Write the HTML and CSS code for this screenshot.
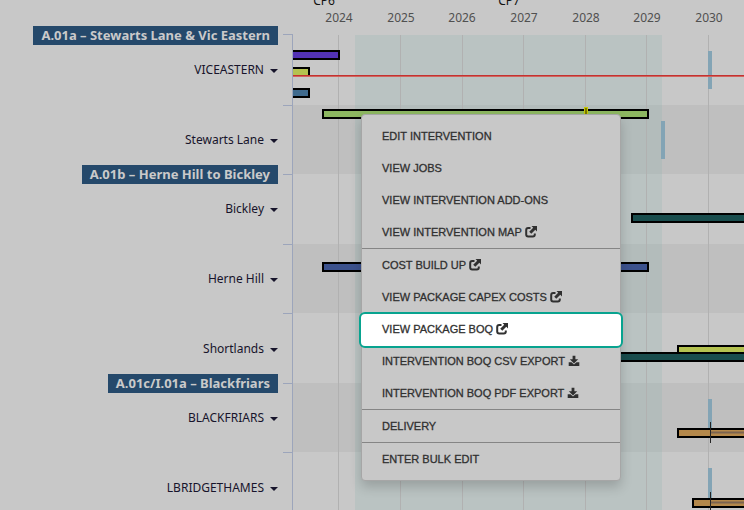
FILE: index.html
```html
<!DOCTYPE html>
<html lang="en">
<head>
<meta charset="utf-8">
<title>Intervention timeline</title>
<link rel="stylesheet" href="styles.css">
</head>
<body>
<svg class="sprite" aria-hidden="true">
  <symbol id="external" viewBox="0 0 12 12">
    <path d="M5.500 2H3.200Q1.200 2 1.200 4v4.600q0 2 2 2h4.600q2 0 2-2V7.400" fill="none" stroke="currentColor" stroke-width="2"/>
    <path d="M6.500 0H12v5.500l-1.700-1.700-4 4-2.100-2.100 4-4z" fill="currentColor"/>
  </symbol>
  <symbol id="download" viewBox="0 0 12 12">
    <path d="M4.600 .8h2.800v3.500h2.800L6 8.400 1.800 4.300h2.800z" fill="currentColor"/>
    <path d="M.7 7.300h2.800L6 9.600l2.500-2.300h2.800v3.700H.7z" fill="currentColor"/>
  </symbol>
</svg>
<main class="timeline">
  <nav class="places" aria-label="Locations">
    <section class="group">
      <h2 class="group-name">A.01a – Stewarts Lane &amp; Vic Eastern</h2>
      <div class="group-rows">
        <button class="place">VICEASTERN<span class="caret"></span></button>
        <button class="place">Stewarts Lane<span class="caret"></span></button>
      </div>
    </section>
    <section class="group">
      <h2 class="group-name">A.01b – Herne Hill to Bickley</h2>
      <div class="group-rows">
        <button class="place">Bickley<span class="caret"></span></button>
        <button class="place">Herne Hill<span class="caret"></span></button>
        <button class="place">Shortlands<span class="caret"></span></button>
      </div>
    </section>
    <section class="group">
      <h2 class="group-name">A.01c/I.01a – Blackfriars</h2>
      <div class="group-rows">
        <button class="place">BLACKFRIARS<span class="caret"></span></button>
        <button class="place">LBRIDGETHAMES<span class="caret"></span></button>
      </div>
    </section>
  </nav>
  <div class="plot">
    <svg class="chart" role="img" aria-label="Interventions by year">
      <g transform="translate(-283 0)">
        <g class="bands">
          <rect x="293" y="105" width="3000" height="69"/>
          <rect x="293" y="244" width="3000" height="69"/>
          <rect x="293" y="383" width="3000" height="69"/>
        </g>
        <rect class="period" x="355" y="35" width="307" height="490"/>
        <path class="grid" d="M338.500 35v490M400.500 35v490M462.500 35v490M523.500 35v490M585.500 35v490M646.500 35v490M708.500 35v490"/>
        <path class="axis" d="M292.500 34v490M283 34.500h10M283 105.500h10M283 174.500h10M283 244.500h10M283 313.500h10M283 383.500h10M283 452.500h10"/>
        <g class="year-names">
          <text x="339" y="22">2024</text><text x="401" y="22">2025</text><text x="462" y="22">2026</text><text x="524" y="22">2027</text><text x="586" y="22">2028</text><text x="647" y="22">2029</text><text x="709" y="22">2030</text>
        </g>
        <g class="period-names">
          <text x="324" y="5">CP6</text><text x="509" y="5">CP7</text>
        </g>
        <g class="marks">
          <rect x="708" y="51" width="4" height="38"/>
          <rect x="661" y="121" width="4" height="38"/>
          <rect x="708" y="399" width="4" height="38"/>
          <rect x="708" y="468" width="4" height="38"/>
        </g>
        <svg x="293" y="0" width="3000" height="520">
          <g class="bars">
            <rect class="purple" x="-9" y="51" width="55" height="8"/>
            <rect class="lime" x="-9" y="68" width="25" height="8"/>
            <rect class="steel" x="-9" y="89" width="25" height="8"/>
            <rect class="green" x="30" y="110" width="325" height="8"/>
            <rect class="teal" x="339" y="214" width="3000" height="8"/>
            <rect class="navy" x="30" y="263" width="325" height="8"/>
            <rect class="lime" x="385" y="346" width="3000" height="10"/>
            <rect class="teal" x="300" y="353" width="3000" height="8"/>
            <rect class="orange" x="385" y="429" width="3000" height="8"/>
            <rect class="orange" x="400" y="499" width="3000" height="8"/>
          </g>
        </svg>
        <path class="range" d="M710 432.500h3000M710 502.500h3000"/>
        <path class="needle" d="M710.500 422v21M710.500 492v21"/>
        <path class="baseline" d="M293 75.500h3000"/>
        <path class="baseline-soft" d="M293 76.500h3000"/>
        <rect class="flag" x="584" y="107" width="4" height="8"/>
        <rect class="flag-core" x="585" y="108" width="2" height="7"/>
      </g>
    </svg>
    <div class="menu" role="menu">
      <button class="item" role="menuitem">EDIT INTERVENTION</button>
      <button class="item" role="menuitem">VIEW JOBS</button>
      <button class="item" role="menuitem">VIEW INTERVENTION ADD-ONS</button>
      <a class="item" role="menuitem" href="#map">VIEW INTERVENTION MAP<svg class="icon"><use href="#external"/></svg></a>
      <hr class="rule">
      <a class="item" role="menuitem" href="#cost">COST BUILD UP<svg class="icon"><use href="#external"/></svg></a>
      <a class="item" role="menuitem" href="#capex">VIEW PACKAGE CAPEX COSTS<svg class="icon"><use href="#external"/></svg></a>
      <a class="item current" role="menuitem" href="#boq">VIEW PACKAGE BOQ<svg class="icon"><use href="#external"/></svg></a>
      <a class="item" role="menuitem" href="#csv">INTERVENTION BOQ CSV EXPORT<svg class="icon"><use href="#download"/></svg></a>
      <a class="item" role="menuitem" href="#pdf">INTERVENTION BOQ PDF EXPORT<svg class="icon"><use href="#download"/></svg></a>
      <hr class="rule">
      <button class="item" role="menuitem">DELIVERY</button>
      <hr class="rule">
      <button class="item" role="menuitem">ENTER BULK EDIT</button>
    </div>
  </div>
</main>
</body>
</html>
```
FILE: styles.css
```css
* { box-sizing: border-box; }
body {
  margin: 0;
  height: 100vh;
  overflow: hidden;
  background: #c8c8c8;
  font-family: "Noto Sans", sans-serif;
  font-size: 12px;
  color: #17142b;
}
.sprite { display: none; }
.timeline { display: flex; height: 100%; }
.places {
  flex: 0 0 283px;
  padding: 26px 5px 0 0;
}
.group {
  display: flex;
  flex-direction: column;
  align-items: flex-end;
}
.group-name {
  margin: 0;
  padding: 0 8px;
  background: #25496b;
  color: #cacaca;
  font-size: 13px;
  font-weight: 700;
  line-height: 19px;
}
.group-rows {
  display: flex;
  flex-direction: column;
  align-items: flex-end;
  gap: 20px;
}
.place {
  display: flex;
  align-items: center;
  gap: 6px;
  height: 50px;
  padding: 0 0 2px;
  border: 0;
  background: none;
  color: inherit;
  font: inherit;
}
.caret {
  margin-top: 3px;
  border: 4px solid transparent;
  border-top-color: currentColor;
  border-bottom: 0;
}
.plot {
  position: relative;
  flex: 1;
  min-width: 0;
}
.chart {
  display: block;
  width: 100%;
  height: 100%;
}
.bands { fill: #bfbfbf; }
.period { fill: #7fb0a8; fill-opacity: .19; }
.grid { stroke: #b1b1b1; }
.axis { fill: none; stroke: #9ca5bb; }
.year-names { fill: #505050; text-anchor: middle; font-size: 12px; }
.period-names { fill: #111; text-anchor: middle; font-size: 12px; }
.marks { fill: #83a4b5; }
.bars { stroke: #000; stroke-width: 2; }
.purple { fill: #5232b4; }
.lime { fill: #b4c250; }
.steel { fill: #406b8e; }
.green { fill: #8db761; }
.teal { fill: #194d4d; }
.navy { fill: #3c528d; }
.orange { fill: #b4884b; }
.range { stroke: #7c6450; stroke-width: 2; }
.needle { stroke: #252525; stroke-width: 1; }
.baseline { stroke: #c43130; }
.baseline-soft { stroke: #d0645e; }
.flag { fill: #c8c800; }
.flag-core { fill: #777700; }
.menu {
  position: absolute;
  top: 114px;
  left: 78px;
  width: 260px;
  padding: 5px 0;
  border: 1px solid #a6a6a6;
  border-radius: 4px;
  background: #c8c8c8;
  box-shadow: 0 6px 12px rgba(0, 0, 0, .18);
}
.item {
  position: relative;
  z-index: 0;
  display: flex;
  align-items: center;
  gap: 3px;
  width: 100%;
  height: 32px;
  padding: 0 20px;
  border: 0;
  background: none;
  color: #303030;
  font-family: "Liberation Sans", sans-serif;
  font-size: 11px;
  text-align: left;
  text-decoration: none;
  white-space: nowrap;
  -webkit-text-stroke: .3px currentColor;
}
.icon { width: 12px; height: 12px; }
.rule {
  height: 1px;
  margin: 0;
  border: 0;
  background: #858585;
}
.current { z-index: 1; }
.current::before {
  content: "";
  position: absolute;
  z-index: -1;
  inset: -1px -3px -3px;
  border: 2px solid #08a38f;
  border-radius: 6px;
  background: #fff;
}
```
